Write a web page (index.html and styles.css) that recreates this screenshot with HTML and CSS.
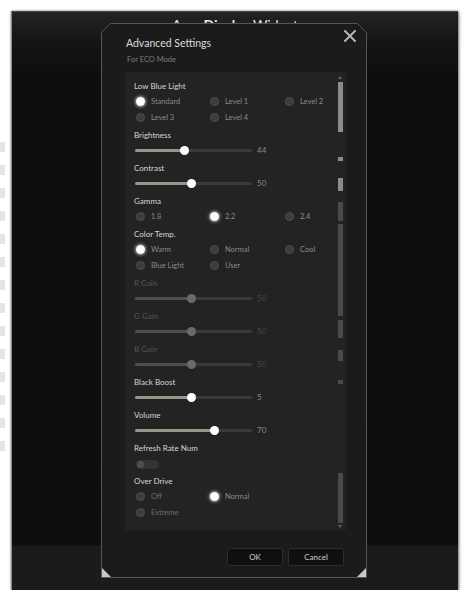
FILE: index.html
```html
<!DOCTYPE html>
<html lang="en">
<head>
    <meta charset="UTF-8">
    <meta name="viewport" content="width=device-width, initial-scale=1.0">
    <title>Acer Display Widget</title>
    <link rel="stylesheet" href="styles.css">
</head>
<body>
    <div class="behind">
        <span></span><span></span><span></span><span></span><span></span>
        <span></span><span></span><span></span><span></span><span></span>
        <span></span><span></span><span></span><span></span>
    </div>

    <div class="app">
        <div class="app-title">Acer <b>Display</b> Widget</div>

        <div class="dialog">
            <svg class="frame" width="266" height="555" viewBox="0 0 266 555">
                <path d="M9.5 0.5 H256.5 L265.5 9.5 V554.5 H0.5 V9.5 Z" fill="none" stroke="#565656" stroke-width="1"/>
                <path d="M1 545 L10 554 L1 554 Z" fill="#c8c8c8"/>
                <path d="M265 545 L256 554 L265 554 Z" fill="#c8c8c8"/>
            </svg>
            <button class="close" aria-label="Close">
                <svg width="12" height="12" viewBox="0 0 12 12">
                    <path d="M1 1 L11 11 M11 1 L1 11" stroke="#b4b4b4" stroke-width="2" stroke-linecap="square"/>
                </svg>
            </button>

            <div class="dialog-title">Advanced Settings</div>
            <div class="dialog-sub">For ECO Mode</div>

            <div class="panel">
                <div class="settings">
                    <div class="group radio-group">
                        <div class="label">Low Blue Light</div>
                        <div class="radios">
                            <div class="radio on"><i></i>Standard</div>
                            <div class="radio"><i></i>Level 1</div>
                            <div class="radio"><i></i>Level 2</div>
                            <div class="radio"><i></i>Level 3</div>
                            <div class="radio"><i></i>Level 4</div>
                        </div>
                    </div>

                    <div class="group">
                        <div class="label">Brightness</div>
                        <div class="slider">
                            <div class="track"><div class="fill" style="width: 43%"></div></div>
                            <span class="value">44</span>
                        </div>
                    </div>

                    <div class="group">
                        <div class="label">Contrast</div>
                        <div class="slider">
                            <div class="track"><div class="fill" style="width: 49%"></div></div>
                            <span class="value">50</span>
                        </div>
                    </div>

                    <div class="group radio-group">
                        <div class="label">Gamma</div>
                        <div class="radios">
                            <div class="radio"><i></i>1.8</div>
                            <div class="radio on"><i></i>2.2</div>
                            <div class="radio"><i></i>2.4</div>
                        </div>
                    </div>

                    <div class="group radio-group">
                        <div class="label">Color Temp.</div>
                        <div class="radios">
                            <div class="radio on"><i></i>Warm</div>
                            <div class="radio"><i></i>Normal</div>
                            <div class="radio"><i></i>Cool</div>
                            <div class="radio"><i></i>Blue Light</div>
                            <div class="radio"><i></i>User</div>
                        </div>
                    </div>

                    <div class="group disabled">
                        <div class="label">R Gain</div>
                        <div class="slider">
                            <div class="track"><div class="fill" style="width: 49%"></div></div>
                            <span class="value">50</span>
                        </div>
                    </div>

                    <div class="group disabled">
                        <div class="label">G Gain</div>
                        <div class="slider">
                            <div class="track"><div class="fill" style="width: 49%"></div></div>
                            <span class="value">50</span>
                        </div>
                    </div>

                    <div class="group disabled">
                        <div class="label">B Gain</div>
                        <div class="slider">
                            <div class="track"><div class="fill" style="width: 49%"></div></div>
                            <span class="value">50</span>
                        </div>
                    </div>

                    <div class="group">
                        <div class="label">Black Boost</div>
                        <div class="slider">
                            <div class="track"><div class="fill" style="width: 49%"></div></div>
                            <span class="value">5</span>
                        </div>
                    </div>

                    <div class="group">
                        <div class="label">Volume</div>
                        <div class="slider">
                            <div class="track"><div class="fill" style="width: 68%"></div></div>
                            <span class="value">70</span>
                        </div>
                    </div>

                    <div class="group">
                        <div class="label">Refresh Rate Num</div>
                        <div class="toggle-row"><span class="toggle"></span></div>
                    </div>

                    <div class="group radio-group">
                        <div class="label">Over Drive</div>
                        <div class="radios">
                            <div class="radio dim"><i></i>Off</div>
                            <div class="radio on"><i></i>Normal</div>
                            <div class="radio empty"></div>
                            <div class="radio dim"><i></i>Extreme</div>
                        </div>
                    </div>
                </div>

                <!-- scrollbar is drawn glitchy in the original, keep the pieces -->
                <div class="scrollbar">
                    <span class="arrow up"></span>
                    <span class="piece light" style="height: 50px; margin-top: 3px"></span>
                    <span class="piece light" style="height: 4px; margin-top: 25px"></span>
                    <span class="piece light" style="height: 13px; margin-top: 17px"></span>
                    <span class="piece" style="height: 19px; margin-top: 11px"></span>
                    <span class="piece" style="height: 92px; margin-top: 3px"></span>
                    <span class="piece" style="height: 18px; margin-top: 4px"></span>
                    <span class="piece" style="height: 11px; margin-top: 12px"></span>
                    <span class="piece" style="height: 4px; margin-top: 19px"></span>
                    <span class="piece" style="height: 50px; margin-top: 89px"></span>
                    <span class="arrow down"></span>
                </div>
            </div>

            <div class="buttons">
                <button class="btn">OK</button>
                <button class="btn">Cancel</button>
            </div>
        </div>
    </div>
</body>
</html>
```

FILE: styles.css
```css
body {
    margin: 0;
    background-color: white;
    font-family: Lato, 'Open Sans', sans-serif;
    display: flex;
    align-items: flex-start;
}

/* bits of the window underneath */
.behind {
    width: 8px;
    padding-top: 142px;
    display: flex;
    flex-direction: column;
    gap: 13px;
}
.behind span {
    display: block;
    width: 5px;
    height: 10px;
    background-color: #e4e4e4;
}

.app {
    position: relative;
    margin: 11px 0 0 3px;
    width: 447px;
    height: 579px;
    border-left: 1px solid #8a8a8a;
    border-top: 1px solid #4a4a4a;
    box-sizing: border-box;
    background: linear-gradient(#242424 0, #141414 30px, #0d0d0d 70px, #0e0e0e 533px, #1b1b1b 534px, #1b1b1b 100%);
    box-shadow: 1px 1px 3px rgba(0, 0, 0, 0.5), 0 0 2px rgba(0, 0, 0, 0.4);
}
.app-title {
    text-align: center;
    color: #e8e8e8;
    font-size: 14px;
    line-height: 16px;
    padding-top: 5px;
}
.app-title b {
    font-weight: 700;
}

.dialog {
    position: absolute;
    left: 89px;
    top: 11px;
    width: 266px;
    height: 555px;
    box-sizing: border-box;
    padding: 14px 21px 0 24px;
    background-color: #1b1b1b;
    clip-path: polygon(9px 0, 257px 0, 266px 9px, 266px 555px, 0 555px, 0 9px);
}
.frame {
    position: absolute;
    left: 0;
    top: 0;
}
.close {
    position: absolute;
    right: 11px;
    top: 7px;
    padding: 0;
    border: none;
    background: none;
    width: 12px;
    height: 12px;
}
.close svg {
    display: block;
}

.dialog-title {
    font-size: 10.5px;
    line-height: 13px;
    color: #dcdcdc;
    padding-left: 1px;
}
.dialog-sub {
    margin-top: 5px;
    padding-left: 2px;
    font-size: 7.5px;
    line-height: 10px;
    color: #7c7c7c;
}

.panel {
    margin-top: 7px;
    height: 458px;
    background-color: #232323;
    display: flex;
}
.settings {
    flex: 1;
    padding: 8px 0 0 9px;
}

.group {
    margin-bottom: 0;
}
.radio-group {
    margin-bottom: 4px;
}
.label {
    height: 13px;
    line-height: 13px;
    font-size: 8px;
    color: #d6d6d6;
}

.radios {
    display: grid;
    grid-template-columns: 74px 75px 1fr;
}
.radio {
    height: 16px;
    display: flex;
    align-items: center;
    gap: 6px;
    font-size: 7.5px;
    color: #8a8a8a;
    padding-left: 2px;
}
.radio i {
    display: block;
    width: 9px;
    height: 9px;
    border-radius: 50%;
    box-sizing: border-box;
    background-color: #3c3c3c;
    border: 1.5px solid #4f4f4f;
}
.radio.on i {
    background-color: #fff;
    border-color: #fff;
    box-shadow: 0 0 3px 1px rgba(255, 255, 255, 0.6);
}
.radio.dim {
    color: #6e6e6e;
}

.slider {
    height: 16px;
    margin-bottom: 4px;
    display: flex;
    align-items: center;
    padding-left: 1px;
}
.track {
    width: 117px;
    height: 3px;
    background-color: #3a3a3a;
    border-radius: 2px;
}
.fill {
    position: relative;
    height: 100%;
    background-color: #98968a;
    border-radius: 2px;
}
.fill::after {
    content: "";
    position: absolute;
    right: -4px;
    top: -3px;
    width: 9px;
    height: 9px;
    border-radius: 50%;
    background-color: #fff;
}
.value {
    margin-left: 5px;
    font-size: 8px;
    color: #8a8a8a;
}

.disabled .label {
    color: #555;
}
.disabled .fill {
    background-color: #505050;
}
.disabled .fill::after {
    background-color: #6a6a6a;
}
.disabled .value {
    color: #474747;
}

.toggle-row {
    height: 16px;
    margin-bottom: 4px;
    padding-top: 2px;
    box-sizing: border-box;
    display: flex;
    align-items: center;
    padding-left: 2px;
}
.toggle {
    position: relative;
    display: block;
    width: 23px;
    height: 9px;
    border-radius: 5px;
    background-color: #343434;
}
.toggle::after {
    content: "";
    position: absolute;
    left: 1px;
    top: 1px;
    width: 7px;
    height: 7px;
    border-radius: 50%;
    background-color: #4e4e4e;
}

.scrollbar {
    width: 6px;
    margin-right: 3px;
    display: flex;
    flex-direction: column;
    align-items: center;
}
.piece {
    display: block;
    width: 5px;
    background-color: #4a4a4a;
}
.piece.light {
    background-color: #8c8c8c;
}
.arrow {
    display: block;
    width: 0;
    height: 0;
    border-left: 2px solid transparent;
    border-right: 2px solid transparent;
}
.arrow.up {
    margin-top: 4px;
    border-bottom: 3px solid #666;
}
.arrow.down {
    margin-top: 2px;
    border-top: 3px solid #666;
}

.buttons {
    margin-top: 18px;
    padding-right: 2px;
    display: flex;
    justify-content: flex-end;
    gap: 5px;
}
.btn {
    width: 56px;
    height: 18px;
    padding: 0;
    font-family: Lato, 'Open Sans', sans-serif;
    font-size: 8px;
    color: #cfcfcf;
    background-color: #0f0f0f;
    border: 1px solid #2c2c2c;
    border-radius: 3px;
}
```
